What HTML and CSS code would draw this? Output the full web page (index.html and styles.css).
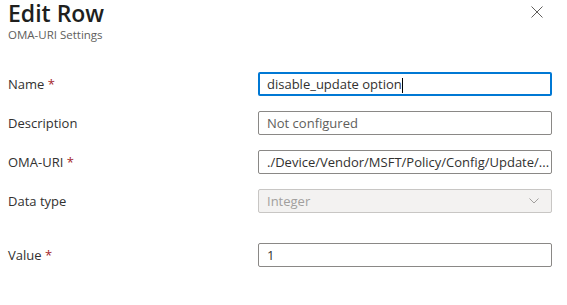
FILE: index.html
```html
<!DOCTYPE html>
<html lang="en">
  <head>
    <meta charset="UTF-8" />
    <title>Edit Row</title>
    <link rel="stylesheet" href="styles.css">
  </head>
  <body>
    <div class="panel">
      <div class="header">
        <div>
          <h2>Edit Row</h2>
          <div class="subtitle">OMA-URI Settings</div>
        </div>
        <button class="close-btn" aria-label="Close">
          <svg width="12" height="12" viewBox="0 0 12 12">
            <path d="M0.5 0.5 L11.5 11.5 M11.5 0.5 L0.5 11.5" stroke="#605e5c" stroke-width="1" fill="none" />
          </svg>
        </button>
      </div>

      <form class="form">
        <div class="row">
          <label>Name <span class="req">*</span></label>
          <div class="field focused">disable_update option<span class="caret"></span></div>
        </div>
        <div class="row">
          <label>Description</label>
          <div class="field placeholder">Not configured</div>
        </div>
        <div class="row">
          <label>OMA-URI <span class="req">*</span></label>
          <div class="field">./Device/Vendor/MSFT/Policy/Config/Update/...</div>
        </div>
        <div class="row">
          <label>Data type</label>
          <div class="field disabled">
            Integer
            <svg class="chevron" width="10" height="6" viewBox="0 0 10 6">
              <path d="M0.5 0.5 L5 5 L9.5 0.5" stroke="#a19f9d" stroke-width="1" fill="none" />
            </svg>
          </div>
        </div>
        <div class="row value-row">
          <label>Value <span class="req">*</span></label>
          <div class="field">1</div>
        </div>
      </form>
    </div>
  </body>
</html>
```

FILE: styles.css
```css
body {
  font-family: "Open Sans", "Noto Sans", sans-serif;
  background-color: #ffffff;
  color: #323130;
  margin: 0;
  padding: 0;
}

.panel {
  padding: 0 15px 0 8px;
}

.header {
  display: flex;
  justify-content: space-between;
  align-items: flex-start;
  height: 72px;
}

h2 {
  margin: 0;
  font-size: 23px;
  font-weight: 600;
  line-height: 26px;
  color: #201f1e;
}

.subtitle {
  font-size: 11.5px;
  line-height: 16px;
  margin-top: 1px;
  color: #605e5c;
}

.close-btn {
  background: none;
  border: none;
  padding: 0;
  margin: 6px 9px 0 0;
  width: 12px;
  height: 12px;
  cursor: pointer;
}

.close-btn svg {
  display: block;
}

.form {
  display: flex;
  flex-direction: column;
  gap: 15px;
}

.row {
  display: flex;
  align-items: center;
}

.row label {
  width: 250px;
  font-size: 13px;
}

.req {
  color: #a4262c;
}

.field {
  flex: 1;
  box-sizing: border-box;
  height: 24px;
  line-height: 22px;
  padding: 0 8px;
  border: 1px solid #8a8886;
  border-radius: 2px;
  font-size: 13px;
  color: #323130;
  white-space: nowrap;
  overflow: hidden;
  position: relative;
}

.field.focused {
  border: 2px solid #0078d4;
  line-height: 20px;
  padding: 0 7px;
}

.caret {
  display: inline-block;
  width: 1px;
  height: 15px;
  background-color: #000;
  vertical-align: middle;
}

.field.placeholder {
  color: #605e5c;
}

.field.disabled {
  background-color: #f3f2f1;
  border-color: #c8c6c4;
  color: #a19f9d;
}

.chevron {
  position: absolute;
  right: 12px;
  top: 8px;
}

.value-row {
  margin-top: 15px;
}
```
